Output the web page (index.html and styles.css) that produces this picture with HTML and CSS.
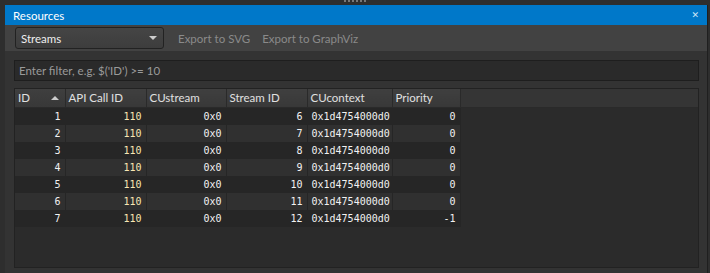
FILE: index.html
```html
<!DOCTYPE html>
<html lang="en">
<head>
  <meta charset="UTF-8" />
  <title>Resources</title>
  <link rel="stylesheet" href="styles.css">
</head>
<body>
  <div class="grip"><span></span><span></span><span></span><span></span><span></span><span></span></div>
  <div class="dock">
    <div class="titlebar">
      <span class="title">Resources</span>
      <span class="close">&#x2715;</span>
    </div>
    <div class="toolbar">
      <div class="combo">
        <span>Streams</span>
        <span class="arrow"></span>
      </div>
      <span class="tool">Export to SVG</span>
      <span class="tool">Export to GraphViz</span>
    </div>
    <div class="content">
      <div class="filter">Enter filter, e.g. $('ID') &gt;= 10</div>
      <div class="grid">
        <table>
          <thead>
            <tr>
              <th class="c-id">ID <span class="sort"></span></th>
              <th class="c-api">API Call ID</th>
              <th class="c-cus">CUstream</th>
              <th class="c-sid">Stream ID</th>
              <th class="c-ctx">CUcontext</th>
              <th class="c-pri">Priority</th>
              <th class="c-fill"></th>
            </tr>
          </thead>
          <tbody>
            <tr><td>1</td><td class="api">110</td><td>0x0</td><td>6</td><td class="left">0x1d4754000d0</td><td>0</td><td class="fill"></td></tr>
            <tr><td>2</td><td class="api">110</td><td>0x0</td><td>7</td><td class="left">0x1d4754000d0</td><td>0</td><td class="fill"></td></tr>
            <tr><td>3</td><td class="api">110</td><td>0x0</td><td>8</td><td class="left">0x1d4754000d0</td><td>0</td><td class="fill"></td></tr>
            <tr><td>4</td><td class="api">110</td><td>0x0</td><td>9</td><td class="left">0x1d4754000d0</td><td>0</td><td class="fill"></td></tr>
            <tr><td>5</td><td class="api">110</td><td>0x0</td><td>10</td><td class="left">0x1d4754000d0</td><td>0</td><td class="fill"></td></tr>
            <tr><td>6</td><td class="api">110</td><td>0x0</td><td>11</td><td class="left">0x1d4754000d0</td><td>0</td><td class="fill"></td></tr>
            <tr><td>7</td><td class="api">110</td><td>0x0</td><td>12</td><td class="left">0x1d4754000d0</td><td>-1</td><td class="fill"></td></tr>
          </tbody>
        </table>
      </div>
    </div>
  </div>
</body>
</html>
```

FILE: styles.css
```css
body {
  margin: 0;
  background: #2e2e2e;
  font-family: Lato, "Liberation Sans", sans-serif;
  font-size: 11.5px;
  color: #dcdcdc;
  width: 710px;
  height: 273px;
  overflow: hidden;
}

/* grip on top */
.grip {
  height: 5px;
  display: flex;
  justify-content: center;
  gap: 2px;
}
.grip span {
  width: 2px;
  height: 2px;
  background: #777;
}

.dock {
  margin-left: 5px;
  width: 702px;
  border-right: 1px solid #1f1f1f;
  height: 268px;
  background: #333;
  display: flex;
  flex-direction: column;
}

.titlebar {
  height: 20px;
  background: #0078c9;
  color: #fff;
  display: flex;
  align-items: center;
  justify-content: space-between;
  padding: 0 8px 0 8px;
}
.close {
  font-family: "DejaVu Sans", sans-serif;
  font-size: 9px;
  font-weight: bold;
  color: #cfe6f7;
}

/* toolbar */
.toolbar {
  height: 26px;
  background: #424242;
  display: flex;
  align-items: center;
  padding: 0 10px;
  gap: 12px;
}
.combo {
  width: 137px;
  height: 20px;
  border: 1px solid #222;
  border-radius: 3px;
  background: linear-gradient(#454545, #3d3d3d);
  display: flex;
  align-items: center;
  justify-content: space-between;
  padding: 0 5px;
  margin-right: 2px;
  color: #eee;
}
.arrow {
  width: 0;
  height: 0;
  border-left: 4px solid transparent;
  border-right: 4px solid transparent;
  border-top: 4px solid #ccc;
  margin-right: 1px;
}
.tool {
  color: #8a8a8a;
}

/* content */
.content {
  flex: 1;
  padding: 9px 8px 0 9px;
  display: flex;
  flex-direction: column;
  gap: 7px;
}
.filter {
  height: 19px;
  border: 1px solid #1e1e1e;
  background: #2a2a2a;
  color: #9a9a9a;
  padding: 0 4px;
  line-height: 19px;
}
.grid {
  height: 178px;
  border: 1px solid #222;
  background: #2b2b2b;
}

table {
  border-collapse: collapse;
  table-layout: fixed;
  width: 100%;
}
th {
  box-sizing: border-box;
  height: 18px;
  padding: 0 3px;
  text-align: left;
  font-weight: normal;
  color: #e0e0e0;
  background: linear-gradient(#3f3f3f, #383838);
  border-right: 1px solid #2a2a2a;
  border-bottom: 1px solid #2a2a2a;
  white-space: nowrap;
}
th.c-fill {
  background: #353535;
  border-right: none;
}
.c-id { width: 50px; position: relative; }
.c-api { width: 81px; }
.c-cus { width: 80px; }
.c-sid { width: 81px; }
.c-ctx { width: 85px; }
.c-pri { width: 68px; }

.sort {
  position: absolute;
  right: 6px;
  top: 7px;
  border-left: 4px solid transparent;
  border-right: 4px solid transparent;
  border-bottom: 4px solid #ccc;
}

td {
  height: 17px;
  padding: 0 4px;
  text-align: right;
  font-family: "DejaVu Sans Mono", "Liberation Mono", monospace;
  font-size: 10px;
  color: #f2f2f2;
  border-right: 1px solid #262626;
  white-space: nowrap;
}
td.left {
  text-align: left;
  padding-left: 4px;
}
td.api {
  color: #f8e7b4;
}
td.fill {
  border-right: none;
  background: #2b2b2b;
}
tbody tr:nth-child(odd) {
  background: #262626;
}
tbody tr:nth-child(even) {
  background: #303030;
}
```
